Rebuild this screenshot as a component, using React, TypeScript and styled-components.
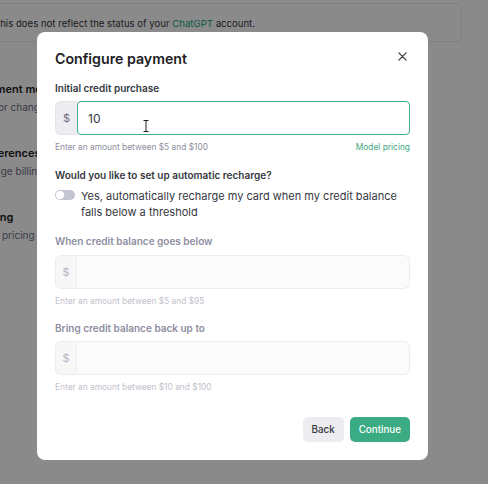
import React from "react";
import styled, { createGlobalStyle } from "styled-components";

const GlobalStyle = createGlobalStyle`
  html, body {
    margin: 0;
    padding: 0;
    background: #ffffff;
  }
  body {
    font-family: Inter, "Noto Sans", "Liberation Sans", sans-serif;
    -webkit-font-smoothing: antialiased;
  }
`;

const Screen = styled.div`
  position: relative;
  width: 488px;
  height: 484px;
  overflow: hidden;
  background: #ffffff;
`;

/* page behind the dialog */
const Page = styled.div`
  display: flex;
  flex-direction: column;
  padding-top: 3px;
`;

const Notice = styled.div`
  display: flex;
  align-items: center;
  margin-left: -60px;
  width: 522px;
  height: 39px;
  box-sizing: border-box;
  padding-left: 53px;
  padding-top: 2px;
  border: 1px solid #ececec;
  border-radius: 6px;
  font-size: 9.6px;
  color: #353740;
  white-space: nowrap;
`;

const Link = styled.span`
  color: #10a37f;
`;

const Sections = styled.div`
  display: flex;
  flex-direction: column;
  gap: 30px;
  margin-top: 39px;
  margin-left: -24px;
`;

const Section = styled.div`
  display: flex;
  flex-direction: column;
  gap: 2px;
  white-space: nowrap;
`;

const SectionTitle = styled.div`
  font-size: 11px;
  line-height: 16px;
  font-weight: 600;
  color: #202123;
`;

const SectionText = styled.div`
  font-size: 10px;
  line-height: 16px;
  color: #6e6e80;
`;

const Backdrop = styled.div`
  position: absolute;
  inset: 0;
  background: rgba(0, 0, 0, 0.46);
`;

const Dialog = styled.div`
  position: absolute;
  left: 37px;
  top: 32px;
  width: 391px;
  box-sizing: border-box;
  padding: 17px 18px 18px;
  background: #ffffff;
  border-radius: 8px;
  display: flex;
  flex-direction: column;
`;

const Header = styled.div`
  display: flex;
  align-items: center;
  justify-content: space-between;
  height: 20px;
`;

const Title = styled.h2`
  margin: 0;
  font-size: 14.2px;
  line-height: 20px;
  font-weight: 600;
  color: #202123;
`;

const Close = styled.button`
  border: 0;
  background: none;
  padding: 0;
  margin-right: 2px;
  margin-top: -5px;
  width: 12px;
  height: 12px;
  display: flex;
  align-items: center;
  justify-content: center;
  color: #353740;
`;

const Label = styled.div<{ $disabled?: boolean; $top: number }>`
  margin-top: ${(p) => p.$top}px;
  font-size: 10px;
  line-height: 14px;
  font-weight: 600;
  color: ${(p) => (p.$disabled ? "#8e8ea0" : "#353740")};
`;

const InputGroup = styled.div<{ $top: number }>`
  position: relative;
  display: flex;
  margin-top: ${(p) => p.$top}px;
  height: 34px;
`;

const Prefix = styled.div<{ $active?: boolean }>`
  width: 22px;
  flex: none;
  display: flex;
  align-items: center;
  justify-content: center;
  box-sizing: border-box;
  font-size: 11px;
  color: ${(p) => (p.$active ? "#6e6e80" : "#b4b4c0")};
  background: ${(p) => (p.$active ? "#ececf1" : "#f7f7f8")};
  border: 1px solid ${(p) => (p.$active ? "#e3e3ea" : "#ececf1")};
  border-right: ${(p) => (p.$active ? "0" : "1px solid #ececf1")};
  border-radius: 6px 0 0 6px;
`;

const Field = styled.div<{ $active?: boolean }>`
  flex: 1;
  display: flex;
  align-items: center;
  box-sizing: border-box;
  padding-left: 10px;
  font-size: 12px;
  color: #353740;
  background: ${(p) => (p.$active ? "#ffffff" : "#fbfbfc")};
  border: ${(p) => (p.$active ? "1.5px solid #3fae86" : "1px solid #ececf1")};
  border-left: ${(p) => (p.$active ? "1.5px solid #3fae86" : "0")};
  border-radius: ${(p) => (p.$active ? "4px" : "0 6px 6px 0")};
`;

const Caret = styled.svg`
  position: absolute;
  left: 88px;
  top: 19px;
`;

const HelpRow = styled.div`
  display: flex;
  justify-content: space-between;
  margin-top: 5px;
`;

const Help = styled.div<{ $muted?: boolean }>`
  font-size: 8.4px;
  line-height: 14px;
  color: ${(p) => (p.$muted ? "#c2c2cc" : "#8e8ea0")};
`;

const HelpLink = styled.div`
  font-size: 8.4px;
  line-height: 14px;
  color: #3fa882;
`;

const ToggleRow = styled.div`
  display: flex;
  gap: 6px;
  margin-top: 6px;
`;

const Toggle = styled.div`
  position: relative;
  flex: none;
  width: 20px;
  height: 10px;
  margin-top: 2px;
  border-radius: 5px;
  background: #c5c5d2;
`;

const Knob = styled.span`
  position: absolute;
  left: 1px;
  top: 1px;
  width: 8px;
  height: 8px;
  border-radius: 50%;
  background: #ffffff;
`;

const ToggleText = styled.div`
  font-size: 11px;
  line-height: 16px;
  color: #353740;
  white-space: nowrap;
`;

const Actions = styled.div`
  display: flex;
  justify-content: flex-end;
  gap: 6px;
  margin-top: 23px;
`;

const Button = styled.button<{ $primary?: boolean }>`
  height: 25px;
  border: 0;
  border-radius: 5px;
  padding: 0 9px;
  font-family: inherit;
  font-size: 9.8px;
  font-weight: 500;
  color: ${(p) => (p.$primary ? "#ffffff" : "#353740")};
  background: ${(p) => (p.$primary ? "#3aab82" : "#ececf1")};
`;

export default function App() {
  return (
    <Screen>
      <GlobalStyle />
      <Page>
        <Notice>
          This does not reflect the status of your&nbsp;<Link>ChatGPT</Link>&nbsp;account.
        </Notice>
        <Sections>
          <Section>
            <SectionTitle>Payment methods</SectionTitle>
            <SectionText>Add or change payment method</SectionText>
          </Section>
          <Section>
            <SectionTitle>Preferences</SectionTitle>
            <SectionText>Change billing preferences</SectionText>
          </Section>
          <Section>
            <SectionTitle>Pricing</SectionTitle>
            <SectionText>View pricing and FAQs</SectionText>
          </Section>
        </Sections>
      </Page>
      <Backdrop />
      <Dialog>
        <Header>
          <Title>Configure payment</Title>
          <Close aria-label="Close">
            <svg width="9" height="9" viewBox="0 0 10 10">
              <path d="M1 1L9 9M9 1L1 9" stroke="currentColor" strokeWidth="1.4" strokeLinecap="round" />
            </svg>
          </Close>
        </Header>

        <Label $top={12}>Initial credit purchase</Label>
        <InputGroup $top={6}>
          <Prefix $active>$</Prefix>
          <Field $active>10</Field>
          <Caret width="6" height="12" viewBox="0 0 6 12">
            <path d="M0.5 0.5h5M3 0.5v11M0.5 11.5h5" stroke="#202123" strokeWidth="1" fill="none" />
          </Caret>
        </InputGroup>
        <HelpRow>
          <Help>Enter an amount between $5 and $100</Help>
          <HelpLink>Model pricing</HelpLink>
        </HelpRow>

        <Label $top={14}>Would you like to set up automatic recharge?</Label>
        <ToggleRow>
          <Toggle>
            <Knob />
          </Toggle>
          <ToggleText>
            Yes, automatically recharge my card when my credit balance
            <br />
            falls below a threshold
          </ToggleText>
        </ToggleRow>

        <Label $top={14} $disabled>
          When credit balance goes below
        </Label>
        <InputGroup $top={7}>
          <Prefix>$</Prefix>
          <Field />
        </InputGroup>
        <HelpRow>
          <Help $muted>Enter an amount between $5 and $95</Help>
        </HelpRow>

        <Label $top={13} $disabled>
          Bring credit balance back up to
        </Label>
        <InputGroup $top={6}>
          <Prefix>$</Prefix>
          <Field />
        </InputGroup>
        <HelpRow>
          <Help $muted>Enter an amount between $10 and $100</Help>
        </HelpRow>

        <Actions>
          <Button>Back</Button>
          <Button $primary>Continue</Button>
        </Actions>
      </Dialog>
    </Screen>
  );
}
